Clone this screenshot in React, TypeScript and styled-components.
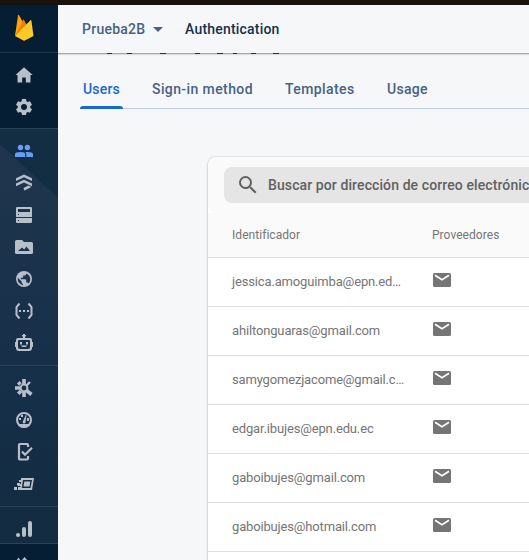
import React from "react";
import styled, { createGlobalStyle } from "styled-components";

const GlobalStyle = createGlobalStyle`
  * { box-sizing: border-box; }
  html, body, #root { margin: 0; height: 100%; }
  body { overflow: hidden; background: #f6f7f9; font-family: Roboto, "Liberation Sans", sans-serif; }
  svg { display: block; flex: none; }
`;

const Page = styled.div`
  display: flex;
  flex-direction: column;
  width: 529px;
  height: 560px;
  overflow: hidden;
`;
const WindowEdge = styled.div`
  flex: none;
  height: 5px;
  background: #18130f;
`;
const Body = styled.div`
  display: flex;
  flex: 1;
  min-height: 0;
`;
const Sidebar = styled.nav`
  display: flex;
  flex-direction: column;
  flex: none;
  width: 58px;
  background: #051e34;
  color: #b7bfc8;
  overflow: hidden;
`;
const LogoCell = styled.div`
  height: 48px;
  padding: 9px 0 0 14px;
  border-bottom: 1px solid #21374c;
  flex: none;
`;
const NavGroup = styled.div<{ $height: number; $pad: number; $bg?: string }>`
  flex: none;
  display: flex;
  flex-direction: column;
  gap: 12px;
  height: ${(p) => p.$height}px;
  padding: ${(p) => p.$pad}px 0 0 14px;
  border-bottom: 1px solid #2b4359;
  background: ${(p) => p.$bg ?? "transparent"};
`;
const NavItem = styled.a<{ $active?: boolean }>`
  width: 20px;
  height: 20px;
  color: ${(p) => (p.$active ? "#669df6" : "inherit")};
`;
const Main = styled.main`
  flex: 1;
  min-width: 0;
  display: flex;
  flex-direction: column;
  background: #f6f7f9;
`;
const Header = styled.header`
  position: relative;
  z-index: 1;
  flex: none;
  display: flex;
  align-items: center;
  height: 48px;
  padding-left: 24px;
  background: #f6f7f9;
  box-shadow: 0 1px 0 rgba(0, 0, 0, 0.25), 0 2px 1px rgba(0, 0, 0, 0.1);
`;
const Project = styled.button`
  display: flex;
  align-items: center;
  gap: 8px;
  width: 103px;
  padding: 0;
  border: 0;
  background: none;
  color: #476282;
  font: 500 14px/20px Roboto, sans-serif;
  letter-spacing: 0.25px;
`;
const Crumb = styled.span`
  color: #14304e;
  font: 500 14px/20px Roboto, sans-serif;
  letter-spacing: 0.2px;
`;
const ScrolledTitle = styled.div`
  position: relative;
  z-index: 2;
  flex: none;
  height: 16px;
`;
const Tabs = styled.div`
  flex: none;
  display: flex;
  height: 40px;
  margin-left: 22px;
  border-bottom: 1px solid #bacbdd;
`;
const Tab = styled.a<{ $active?: boolean; $width: number; $spacing: number }>`
  width: ${(p) => p.$width}px;
  height: 40px;
  flex: none;
  padding: 10px 0 0 3px;
  color: ${(p) => (p.$active ? "#1967d2" : "#476282")};
  font: 500 14px/20px Roboto, sans-serif;
  letter-spacing: ${(p) => p.$spacing}px;
  white-space: nowrap;
  &::after {
    content: "";
    display: ${(p) => (p.$active ? "block" : "none")};
    width: 43px;
    height: 3px;
    margin: 7px 0 0 -3px;
    border-radius: 3px 3px 0 0;
    background: #1967d2;
  }
`;
const Card = styled.section`
  flex: none;
  width: 400px;
  margin: 48px 0 0 150px;
  border-radius: 8px;
  background: #fff;
  box-shadow: 0 0 2px rgba(0, 0, 0, 0.28), 0 2px 3px rgba(0, 0, 0, 0.12);
`;
const Toolbar = styled.div`
  height: 56px;
  padding: 10px 0 0 16px;
  border-radius: 8px 8px 0 8px;
  background: #fafafa;
`;
const Search = styled.div<{ $spacing: number }>`
  display: flex;
  align-items: center;
  gap: 8px;
  height: 36px;
  padding-left: 12px;
  border-radius: 8px;
  background: #e5e5e5;
  color: #616161;
  font: 500 14px/20px Roboto, sans-serif;
  letter-spacing: ${(p) => p.$spacing}px;
  white-space: nowrap;
  overflow: hidden;
`;
const Row = styled.div<{ $head?: boolean }>`
  display: grid;
  grid-template-columns: 200px 1fr;
  align-items: center;
  height: ${(p) => (p.$head ? 45 : 49)}px;
  padding-left: 24px;
  border-bottom: 1px solid #dfdfdf;
  background: ${(p) => (p.$head ? "#fafafa" : "#fff")};
  color: #757575;
`;
const HeadCell = styled.span<{ $spacing: number }>`
  font: 400 12px/16px Roboto, sans-serif;
  letter-spacing: ${(p) => p.$spacing}px;
`;
const Identifier = styled.span<{ $spacing: number }>`
  font: 400 13px/18px Roboto, sans-serif;
  letter-spacing: ${(p) => p.$spacing}px;
  white-space: nowrap;
`;
const MailBox = styled.span`
  padding: 0 0 4px 1px;
`;

const Icon = ({ children }: { children: React.ReactNode }) => (
  <svg width="20" height="20" viewBox="0 0 20 20" fill="currentColor">
    {children}
  </svg>
);

const Logo = () => (
  <svg width="20" height="28" viewBox="0 0 20 28">
    <path d="M1 22 4 1.5Q4.5.3 5.2 1.4L8.6 8z" fill="#ffa000" />
    <path d="m1 22 8-16q.5-1 1.1 0l3.1 6z" fill="#f57c00" />
    <path d="m1 22 4.8-19L8.4 8z" fill="#ffa611" />
    <path d="M1 22 16.5 6.2q.7-.6.9.4L19.5 22l-8.7 4.6q-.7.4-1.4 0z" fill="#ffca28" />
  </svg>
);

const Home = () => <Icon><path d="M8.2 17.5v-5h3.6v5h4.7V10h2.2L10 2.2 1.5 10h2v7.5z" /></Icon>;
const Gear = () => (
  <Icon>
    <path fillRule="evenodd" d="M8 2h4l.4 2.300 1.400.8L16 4.300l2 3.400L16.200 9.200v1.600L18 12.300l-2 3.400-2.200-.8-1.400.8L12 18H8l-.4-2.300-1.400-.8-2.200.8-2-3.400 1.800-1.500V9.200L2 7.700l2-3.400 2.200.8 1.400-.8zM10 7a3 3 0 1 0 0 6 3 3 0 0 0 0-6z" />
  </Icon>
);
const People = () => (
  <Icon>
    <circle cx="6.500" cy="6.500" r="2.700" />
    <circle cx="13.400" cy="6.500" r="2.700" />
    <path d="M1 16v-2.800C1 11.800 3 11 6.500 11s4.700.8 4.700 2.200V16zM12.300 16v-2.500c0-1-.3-1.700-.9-2.300.7-.2 1.400-.2 2-.2 3.600 0 5.600.8 5.600 2.200V16z" />
  </Icon>
);
const Firestore = () => (
  <Icon>
    <path d="m10 1.400 8 3.800v2.800l-8-3.700-8 3.700V5.200zM10 6.700l8 3.700v2.900l-8-3.700-8 3.700v-2.900zM9.500 15l4.900-2.500 3 1.400-5.400 2.800-1.700.8z" />
  </Icon>
);
const Database = () => (
  <Icon>
    <path fillRule="evenodd" d="M3 2h14q1 0 1 1v9H2V3q0-1 1-1zm1 2v3h12V4zm0 5v1h1V9zM2 13h16v4q0 1-1 1H3q-1 0-1-1zm2 2v1h1v-1z" />
  </Icon>
);
const Storage = () => (
  <Icon>
    <path fillRule="evenodd" d="M2.500 3H8l2 2h7.500q1.500 0 1.500 1.500v9q0 1.500-1.500 1.500h-15Q1 17 1 15.500v-11Q1 3 2.500 3zM4 14h12l-3.500-4.500-2.300 3-2.200-2z" />
  </Icon>
);
const Globe = () => (
  <Icon>
    <circle cx="10" cy="10" r="8" />
    <path d="M9 16.300A6.300 6.300 0 0 1 3.900 8.700L7.600 12.400v1c0 .8.600 1.400 1.400 1.400zM14.500 14.600c-.2-.7-.8-1.200-1.500-1.200h-.8v-2.300c0-.5-.3-.8-.8-.8H6.800V8.700h1.600c.4 0 .8-.4.800-.8V6.400h1.500c.9 0 1.600-.7 1.600-1.600v-.4a6.300 6.300 0 0 1 2.200 10.200z" fill="#1c344d" />
  </Icon>
);
const Functions = () => (
  <Icon>
    <path d="M5.500 2.500 2.500 6v8l3 3.500M14.500 2.500l3 3.500v8l-3 3.500" fill="none" stroke="currentColor" strokeWidth="2" />
    <path d="M5 9h2v2H5zM9 9h2v2H9zM13 9h2v2h-2z" />
  </Icon>
);
const Robot = () => (
  <Icon>
    <path fillRule="evenodd" d="M9 1h2v4h5q2 0 2 2v2h1v5h-1v1q0 3-3 3H5q-3 0-3-3v-1H1V9h1V7q0-2 2-2h5zM5 7Q4 7 4 8v6q0 2 2 2h8q2 0 2-2V8q0-1-1-1z" />
    <path d="M8 2h4v1.500H8zM6 9h2v2.500H6zM12 9h2v2.500h-2zM7 12.500h6L12 14H8z" />
  </Icon>
);
const Extensions = () => (
  <Icon>
    <g fill="none" stroke="currentColor">
      <circle cx="10" cy="10" r="3.400" strokeWidth="2" />
      <path d="M10 6V1M6 10H1M10 14v5M12.500 12.500l5 4M6.500 6.500 4.200 4.200M7 13l-2.800 2.800" strokeWidth="3.600" />
      <path d="m12.500 7.500 3.500-3.500" strokeWidth="2.400" />
    </g>
    <circle cx="10" cy="10" r="1.600" fill="#16304a" />
  </Icon>
);
const Gauge = () => (
  <Icon>
    <circle cx="10" cy="10" r="7" fill="none" stroke="currentColor" strokeWidth="2" />
    <path d="M4 14h12v1l-3 2.500H7L4 15zM8.600 12l3.200-7 .7.300-1.100 7.500a1.500 1.500 0 0 1-2.800-.8zM5 8h2v2H5zM7 5h2v2H7zM13 8h2v3h-2z" />
  </Icon>
);
const TestLab = () => (
  <Icon>
    <path d="M14 5V3q0-1-1-1H6Q5 2 5 3v13q0 1.500 1.500 1.500H13q1 0 1-1V14" fill="none" stroke="currentColor" strokeWidth="2.200" />
    <path d="m8 9.500 3 3.200 7-7" fill="none" stroke="currentColor" strokeWidth="2.200" />
  </Icon>
);
const Distribution = () => (
  <Icon>
    <path fillRule="evenodd" d="M7 4h13l-2 12H5v-1.500h1L6.500 12H3.500v-2h3.300l.3-2H5V6h2zm2 2-1.200 8h8.700L18 6z" />
    <path d="M10.300 7.500h6l-.8 5h-6zM0 13h3v3H0zM4 13h3v3H4zM3 9h3v2H3z" />
  </Icon>
);
const Analytics = () => (
  <Icon>
    <path d="M16 4v12M10 10v6M4 16h.1" fill="none" stroke="currentColor" strokeWidth="4" strokeLinecap="round" />
  </Icon>
);
const Growth = () => (
  <Icon><path d="M2.500 5.500l2-3 2 3v8h-4zM8 5l2.500-3L13 5v9H8z" /></Icon>
);
const SearchIcon = () => (
  <svg width="24" height="24" viewBox="0 0 24 24" fill="currentColor">
    <path d="M15.500 14h-.79l-.28-.27A6.470 6.470 0 0 0 16 9.500 6.500 6.500 0 1 0 9.500 16c1.610 0 3.090-.59 4.230-1.570l.27.28v.79l5 4.990L20.490 19zm-6 0a4.500 4.500 0 1 1 0-9 4.500 4.500 0 0 1 0 9z" />
  </svg>
);
const Mail = () => (
  <svg width="18" height="14" viewBox="0 0 18 14">
    <rect width="18" height="14" rx="1.500" fill="#757575" />
    <path d="m2 2.300 7 4.400 7-4.400" fill="none" stroke="#fff" strokeWidth="1.700" />
  </svg>
);
const Caret = () => (
  <svg width="10" height="5" viewBox="0 0 10 5"><path d="M0 0h10L5 5z" fill="#476282" /></svg>
);

// The lowest pixel row of the page title, which has scrolled under the header.
const TitleEdge = () => (
  <svg width="240" height="1" viewBox="0 0 240 1">
    <path d="M49 .5h5M69 .5h5M102 .5h6M137 .5h5M159 .5h6M175 .5h4M193 .5h5M215 .5h6" stroke="#1c3450" />
  </svg>
);

const buildIcons = [Firestore, Database, Storage, Globe, Functions, Robot];
const qualityIcons = [Extensions, Gauge, TestLab, Distribution];
const users = [
  { id: "jessica.amoguimba@epn.ed…", spacing: -0.15 },
  { id: "ahiltonguaras@gmail.com", spacing: -0.15 },
  { id: "samygomezjacome@gmail.c…", spacing: -0.17 },
  { id: "edgar.ibujes@epn.edu.ec", spacing: -0.15 },
  { id: "gaboibujes@gmail.com", spacing: -0.16 },
  { id: "gaboibujes@hotmail.com", spacing: -0.16 },
];

export default function App() {
  return (
    <Page>
      <GlobalStyle />
      <WindowEdge />
      <Body>
        <Sidebar>
          <LogoCell><Logo /></LogoCell>
          <NavGroup $height={76} $pad={12}>
            <NavItem><Home /></NavItem>
            <NavItem><Gear /></NavItem>
          </NavGroup>
          <NavGroup $height={237} $pad={12} $bg="linear-gradient(43deg, transparent 0 calc(100% - 51px), #132d43 calc(100% - 50px)), linear-gradient(#20364e, #172f49)">
            <NavItem $active><People /></NavItem>
            {buildIcons.map((Glyph, i) => <NavItem key={i}><Glyph /></NavItem>)}
          </NavGroup>
          <NavGroup $height={141} $pad={12} $bg="linear-gradient(#16304a, #132c42)">
            {qualityIcons.map((Glyph, i) => <NavItem key={i}><Glyph /></NavItem>)}
          </NavGroup>
          <NavGroup $height={37} $pad={12} $bg="#132c42">
            <NavItem><Analytics /></NavItem>
          </NavGroup>
          <NavGroup $height={40} $pad={11}>
            <NavItem><Growth /></NavItem>
          </NavGroup>
        </Sidebar>
        <Main>
          <Header>
            <Project>Prueba2B <Caret /></Project>
            <Crumb>Authentication</Crumb>
          </Header>
          <ScrolledTitle><TitleEdge /></ScrolledTitle>
          <Tabs>
            <Tab $active $width={69} $spacing={0.2}>Users</Tab>
            <Tab $width={133} $spacing={0.4}>Sign-in method</Tab>
            <Tab $width={102} $spacing={0.4}>Templates</Tab>
            <Tab $width={60} $spacing={0.3}>Usage</Tab>
          </Tabs>
          <Card>
            <Toolbar>
              <Search $spacing={0.1}><SearchIcon /><span>Buscar por dirección de correo electrónico</span></Search>
            </Toolbar>
            <Row $head>
              <HeadCell $spacing={0.05}>Identificador</HeadCell>
              <HeadCell $spacing={0.05}>Proveedores</HeadCell>
            </Row>
            {users.map((u) => (
              <Row key={u.id}>
                <Identifier $spacing={u.spacing}>{u.id}</Identifier>
                <MailBox><Mail /></MailBox>
              </Row>
            ))}
            <Row />
          </Card>
        </Main>
      </Body>
    </Page>
  );
}
